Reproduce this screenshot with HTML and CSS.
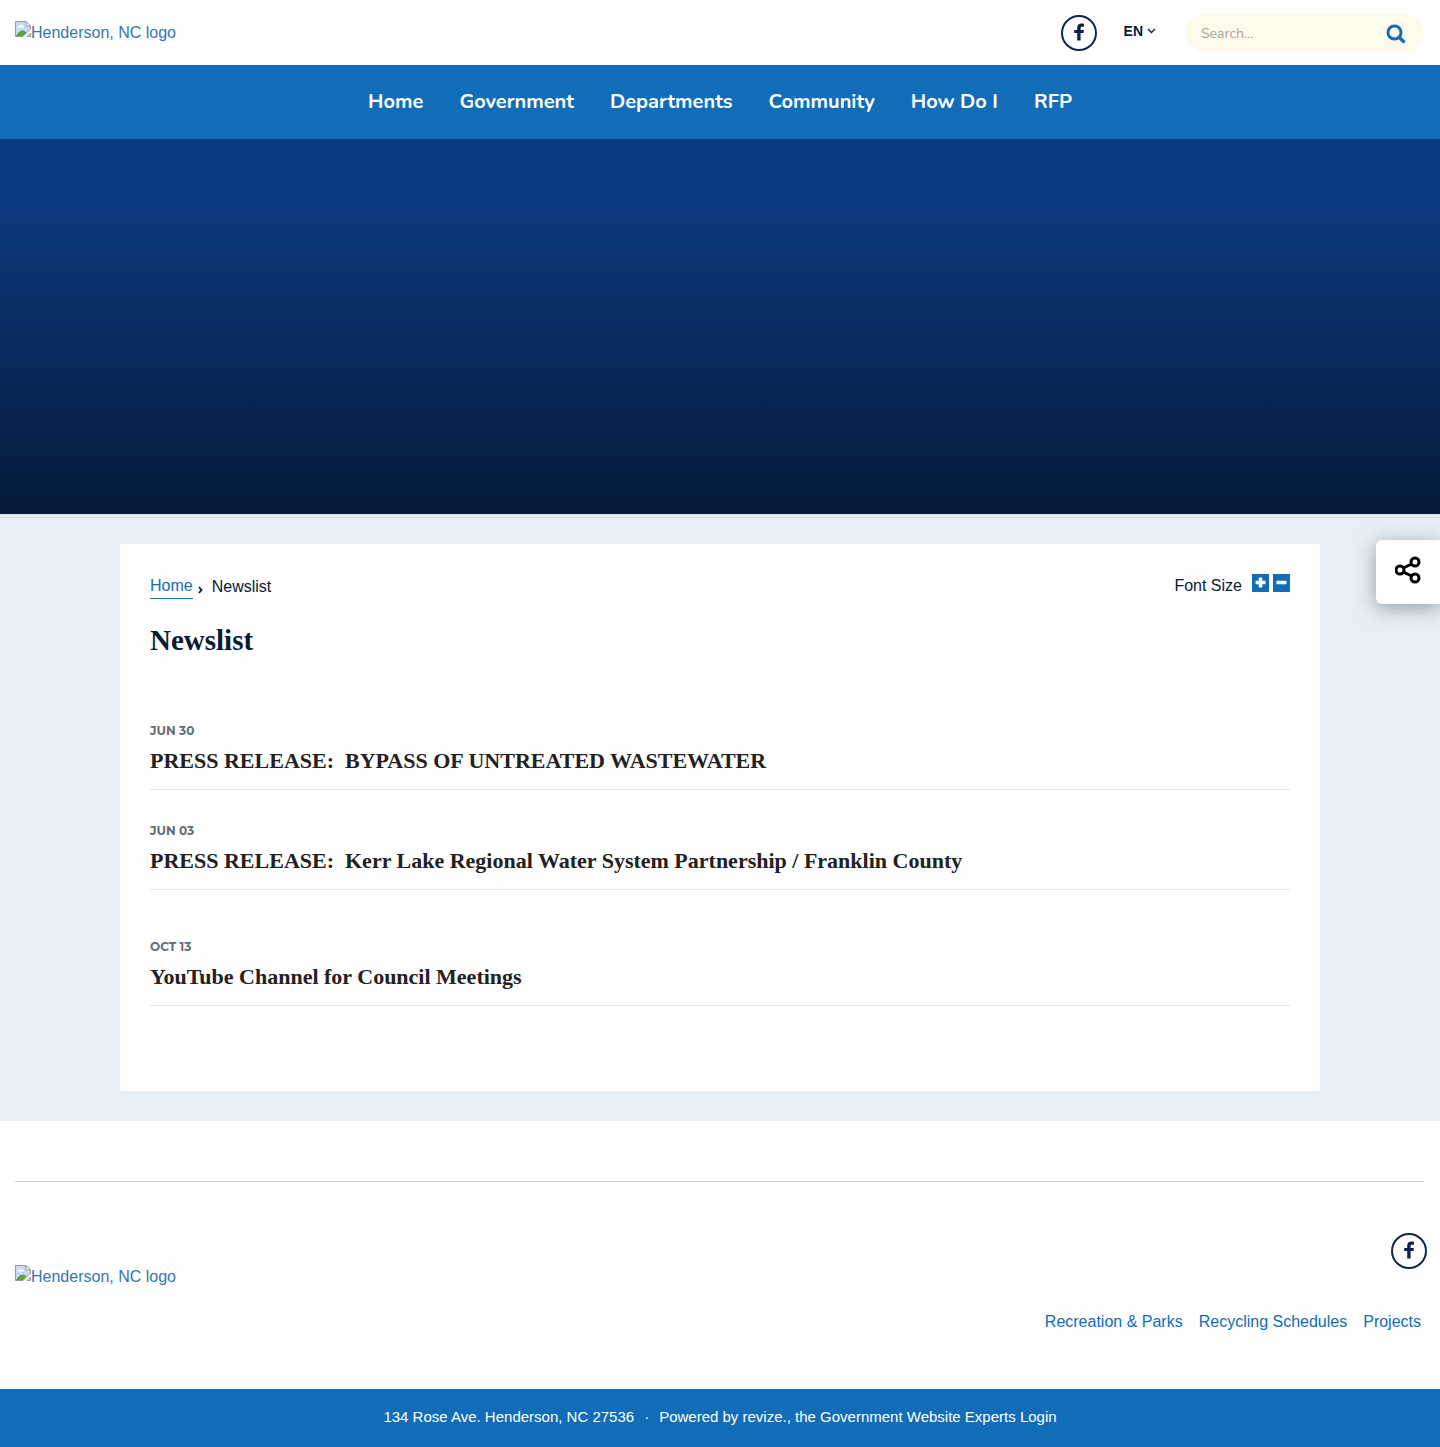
FILE: index.html
```html
<!DOCTYPE html>
<html lang="en">
<head>
<meta charset="utf-8">
<meta name="viewport" content="width=device-width, initial-scale=1">
<title>Newslist - Henderson, NC</title>
<link rel="stylesheet" href="styles.css">
</head>
<body>
<svg class="defs" width="0" height="0" aria-hidden="true">
  <symbol id="facebook" viewBox="0 0 12 18">
    <path d="M11 .8v3H9.200C7.900 3.800 7.600 4.400 7.600 5.400V7H10.900L10.500 10.100H7.600V17.500H4.200V10.100H1.200V7H4.200V4.800C4.200 2.100 5.900.6 8.400.6 9.600.6 10.600.7 11 .8Z" fill="currentColor"/>
  </symbol>
  <symbol id="broken" viewBox="0 0 16 16">
    <path d="M.5 15.500V.5H11L15.500 5V8L8 15.500Z" fill="#c9d8f5" stroke="#9a9a9a"/>
    <path d="M11 .5V5H15.500Z" fill="#fff" stroke="#9a9a9a"/>
    <path d="M3 6.500a2 2 0 0 1 3-2 2 2 0 0 1 3 2Z" fill="#fff"/>
    <path d="M1 15C3 11 6 9 9 9.500L11.500 11.500 8 15Z" fill="#55a63a"/>
    <path d="M12 15.500 15.500 12V15.500Z" fill="#c9d8f5" stroke="#9a9a9a"/>
  </symbol>
</svg>

<header class="topbar">
  <a class="logo" href="#"><svg width="16" height="16" aria-hidden="true"><use href="#broken"/></svg>Henderson, NC logo</a>
  <div class="tools">
    <a class="social" href="#" aria-label="Facebook"><svg width="12" height="18"><use href="#facebook"/></svg></a>
    <button class="language" type="button">EN
      <svg width="9" height="6" viewBox="0 0 9 6" aria-hidden="true"><path d="M1 1 4.500 4.500 8 1" fill="none" stroke="currentColor" stroke-width="1.300"/></svg>
    </button>
    <form class="search">
      <input type="text" placeholder="Search..." aria-label="Search">
      <button type="button" aria-label="Submit search"><svg width="20" height="20" viewBox="0 0 20 20"><circle cx="8.500" cy="8.500" r="6.500" fill="none" stroke="currentColor" stroke-width="3"/><path d="m13.500 13.500 4 4" stroke="currentColor" stroke-width="3.400" stroke-linecap="round"/></svg></button>
    </form>
  </div>
</header>

<nav class="mainnav" aria-label="Main">
  <a href="#">Home</a>
  <a href="#">Government</a>
  <a href="#">Departments</a>
  <a href="#">Community</a>
  <a href="#">How Do I</a>
  <a href="#">RFP</a>
</nav>

<div class="hero"></div>

<main class="main">
  <button class="share" type="button" aria-label="Share"><svg width="26" height="28" viewBox="0 0 26 28" fill="none" stroke="currentColor" stroke-width="3"><circle cx="5" cy="14" r="4"/><circle cx="20" cy="6" r="4"/><circle cx="20" cy="22" r="4"/><path d="m8.500 12 8-4M8.500 16l8 4"/></svg></button>
  <article class="card">
    <div class="card-top">
      <div class="breadcrumb">
        <a href="#">Home</a>
        <svg width="5" height="8" viewBox="0 0 5 8" aria-hidden="true"><path d="m1 1 2.500 3L1 7" fill="none" stroke="currentColor" stroke-width="1.800"/></svg>
        <span>Newslist</span>
      </div>
      <div class="fontsize">
        <span>Font Size</span>
        <button type="button" aria-label="Increase font size"><svg width="11" height="11" viewBox="0 0 11 11"><path d="M5.500 .5V10.500M.5 5.500H10.500" stroke="currentColor" stroke-width="3.500"/></svg></button>
        <button type="button" aria-label="Decrease font size"><svg width="11" height="11" viewBox="0 0 11 11"><path d="M.5 5.500H10.500" stroke="currentColor" stroke-width="3.500"/></svg></button>
      </div>
    </div>
    <h1>Newslist</h1>
    <ul class="news">
      <li><time>JUN 30</time><h2>PRESS RELEASE:&nbsp; BYPASS OF UNTREATED WASTEWATER</h2></li>
      <li><time>JUN 03</time><h2>PRESS RELEASE:&nbsp; Kerr Lake Regional Water System Partnership / Franklin County</h2></li>
    </ul>
    <ul class="news">
      <li><time>OCT 13</time><h2>YouTube Channel for Council Meetings</h2></li>
    </ul>
  </article>
</main>

<footer>
  <div class="footer-main">
    <a class="logo" href="#"><svg width="16" height="16" aria-hidden="true"><use href="#broken"/></svg>Henderson, NC logo</a>
    <div class="footer-side">
      <a class="social" href="#" aria-label="Facebook"><svg width="12" height="18"><use href="#facebook"/></svg></a>
      <div class="footer-links">
        <a href="#">Recreation &amp; Parks</a>
        <a href="#">Recycling Schedules</a>
        <a href="#">Projects</a>
      </div>
    </div>
  </div>
  <div class="copyright">
    <span>134 Rose Ave. Henderson, NC 27536</span>
    <span>·</span>
    <span>Powered by <a href="#">revize.</a>, the Government Website Experts <a href="#">Login</a></span>
  </div>
</footer>
</body>
</html>
```
FILE: styles.css
```css
* { box-sizing: border-box; }
body {
  margin: 0;
  background: #fefefe;
  color: #0b1a33;
  font: 16px/24px "Liberation Sans", Arial, sans-serif;
}
a { color: #116db7; text-decoration: none; }
button { border: 0; padding: 0; background: none; font: inherit; cursor: pointer; }
svg { display: block; }
.defs { position: absolute; }

.topbar {
  display: flex;
  justify-content: space-between;
  align-items: center;
  height: 65px;
  padding: 0 16px 0 15px;
}
.logo { display: flex; align-items: center; color: #3676ae; }
.logo svg { margin-bottom: 8px; }
.tools { display: flex; align-items: center; }
.social {
  display: flex;
  align-items: center;
  justify-content: center;
  width: 36px;
  height: 36px;
  padding-bottom: 2px;
  border: 2px solid #14264f;
  border-radius: 50%;
  color: #0f1f4b;
}
.language {
  display: flex;
  align-items: center;
  gap: 4px;
  margin: 0 30px 4px 27px;
  font-size: 14px;
  font-weight: 700;
  color: #0b1a33;
}
.search {
  display: flex;
  align-items: center;
  width: 238px;
  height: 38px;
  padding: 2px 18px 0 15px;
  border-radius: 19px;
  background: #fdfaeb;
}
.search input {
  flex: 1;
  min-width: 0;
  padding: 0;
  border: 0;
  background: none;
  font: 14px/20px Nunito, "Open Sans", sans-serif;
}
.search input::placeholder { color: #a5a69e; opacity: 1; }
.search button { color: #116db7; }

.mainnav {
  display: flex;
  flex-wrap: wrap;
  justify-content: center;
  gap: 0 36px;
  padding: 22px 16px;
  background: #116db7;
  font: 700 20px/30px Nunito, Lato, sans-serif;
}
.mainnav a { color: #fff; }

.hero {
  height: 375px;
  background: linear-gradient(#0b3a80 15%, #061a39);
}

.main {
  position: relative;
  padding: 26px 30px 30px;
  border-top: 4px double #d3e1e6;
  background: #e7eef5;
}
.share {
  position: absolute;
  top: 22px;
  right: 0;
  display: flex;
  align-items: center;
  justify-content: center;
  width: 64px;
  height: 64px;
  padding-bottom: 4px;
  border-radius: 6px 0 0 6px;
  background: #fff;
  color: #000;
  box-shadow: 0 4px 20px rgba(0, 0, 0, .35);
}
.card {
  max-width: 1200px;
  margin: 0 auto;
  padding: 30px 30px 85px;
  background: #fefefe;
}
.card-top { display: flex; justify-content: space-between; align-items: flex-start; }
.breadcrumb { display: flex; align-items: center; }
.breadcrumb a { border-bottom: 1px solid #116db7; }
.breadcrumb svg { margin: 6px 9px 0 5px; }
.fontsize { display: flex; gap: 4px; }
.fontsize span { margin-right: 6px; }
.fontsize button {
  display: flex;
  justify-content: center;
  width: 17px;
  height: 18px;
  padding-top: 3px;
  background: #116db7;
  color: #fff;
}
h1 {
  margin: 24px 0 33px;
  color: #0b1a33;
  font: 700 29px/34px "Liberation Serif", "Times New Roman", serif;
}
.news { list-style: none; margin: 0 0 16px; padding: 0; }
.news li { padding: 31px 0 15px; border-bottom: 1px solid #e5e6e8; }
.news time {
  display: block;
  margin-bottom: 7px;
  color: #666d76;
  font: 700 12px/20px Montserrat, Inter, sans-serif;
}
.news h2 {
  margin: 0;
  color: #212121;
  font: 700 22px/26px "Liberation Serif", "Times New Roman", serif;
}
.news:last-child { margin-bottom: 0; }

.footer-main {
  display: flex;
  justify-content: space-between;
  align-items: center;
  margin: 60px 16px 0 15px;
  padding: 51px 0 55px;
  border-top: 1px solid #cbcfd1;
}
.footer-main .logo { margin-bottom: 14px; }
.footer-side { display: flex; flex-direction: column; align-items: flex-end; gap: 41px; }
.footer-side .social { margin-right: -3px; }
.footer-links { display: flex; flex-wrap: wrap; gap: 16px; margin-right: 3px; }
.copyright {
  display: flex;
  flex-wrap: wrap;
  justify-content: center;
  gap: 0 10px;
  padding: 16px 16px 18px;
  background: #116db7;
  color: #fff;
  font-size: 15px;
}
.copyright a { color: inherit; }
```
